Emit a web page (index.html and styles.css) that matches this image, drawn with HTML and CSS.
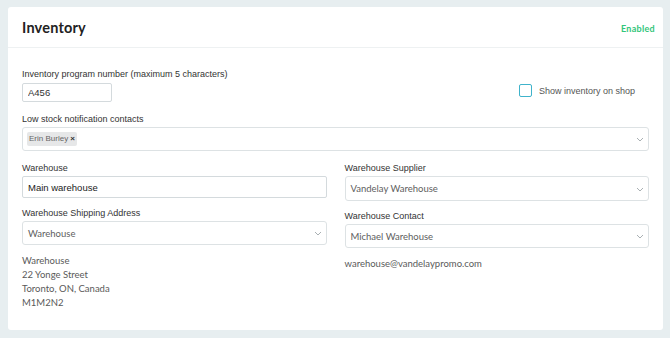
FILE: index.html
```html
<!DOCTYPE html>
<html lang="en">
<head>
  <meta charset="UTF-8">
  <title>Inventory</title>
  <link rel="stylesheet" href="styles.css">
</head>
<body>
  <div class="card">
    <div class="card-header">
      <h2>Inventory</h2>
      <span class="status">Enabled</span>
    </div>
    <div class="card-body">
      <div class="row-top">
        <div class="field">
          <label>Inventory program number (maximum 5 characters)</label>
          <input type="text" class="input input-short" value="A456">
        </div>
        <label class="check">
          <span class="box"></span>
          Show inventory on shop
        </label>
      </div>

      <div class="field">
        <label>Low stock notification contacts</label>
        <div class="multi">
          <span class="tag">Erin Burley <b>&times;</b></span>
          <svg class="chevron" viewBox="0 0 8 5" width="8" height="5"><path d="M1 1l3 3 3-3" fill="none" stroke="#a9b0b3" stroke-width="1"/></svg>
        </div>
      </div>

      <div class="columns">
        <div class="col">
          <div class="field">
            <label>Warehouse</label>
            <input type="text" class="input input-dark" value="Main warehouse">
          </div>
          <div class="field">
            <label>Warehouse Shipping Address</label>
            <div class="select">
              Warehouse
              <svg class="chevron" viewBox="0 0 8 5" width="8" height="5"><path d="M1 1l3 3 3-3" fill="none" stroke="#a9b0b3" stroke-width="1"/></svg>
            </div>
          </div>
          <p class="info">Warehouse<br>22 Yonge Street<br>Toronto, ON, Canada<br>M1M2N2</p>
        </div>
        <div class="col">
          <div class="field">
            <label>Warehouse Supplier</label>
            <div class="select select-tall">
              Vandelay Warehouse
              <svg class="chevron" viewBox="0 0 8 5" width="8" height="5"><path d="M1 1l3 3 3-3" fill="none" stroke="#a9b0b3" stroke-width="1"/></svg>
            </div>
          </div>
          <div class="field">
            <label>Warehouse Contact</label>
            <div class="select">
              Michael Warehouse
              <svg class="chevron" viewBox="0 0 8 5" width="8" height="5"><path d="M1 1l3 3 3-3" fill="none" stroke="#a9b0b3" stroke-width="1"/></svg>
            </div>
          </div>
          <p class="info">warehouse@vandelaypromo.com</p>
        </div>
      </div>
    </div>
  </div>
</body>
</html>
```

FILE: styles.css
```css
* {
  box-sizing: border-box;
  margin: 0;
  padding: 0;
}

body {
  background: #e7eef0;
  padding: 7px 7px 9px 8px;
  font-family: 'Liberation Sans', Arial, sans-serif;
  color: #333;
}

.card {
  background: #fff;
  border-radius: 3px;
  height: 323px;
}

.card-header {
  height: 41px;
  display: flex;
  align-items: center;
  justify-content: space-between;
  padding: 0 8px 0 14px;
  border-bottom: 1px solid #eef1f2;
}

.card-header h2 {
  font-family: 'Lato', sans-serif;
  font-size: 14.5px;
  font-weight: 700;
  color: #222;
  letter-spacing: 0.2px;
  margin-top: 1px;
}

.status {
  font-family: 'Lato', sans-serif;
  font-size: 9px;
  font-weight: 700;
  color: #33c57a;
  letter-spacing: 0.3px;
  margin-top: 2px;
}

.card-body {
  padding: 20px 14px 0 14px;
  display: flex;
  flex-direction: column;
  gap: 11px;
}

.field {
  display: flex;
  flex-direction: column;
  gap: 2px;
}

label {
  font-size: 9px;
  line-height: 12px;
  color: #333;
}

.row-top {
  display: flex;
  align-items: flex-end;
  justify-content: space-between;
}

.row-top .field {
  gap: 3px;
}

.input {
  height: 19px;
  border: 1px solid #d4dadd;
  border-radius: 2px;
  padding: 0 5px;
  font-family: 'Liberation Sans', Arial, sans-serif;
  font-size: 9.5px;
  color: #333;
  outline: none;
}

.input-short {
  width: 90px;
}

.input-dark {
  height: 22px;
  font-size: 9.5px;
  color: #222;
}

.check {
  display: flex;
  align-items: center;
  gap: 7px;
  color: #555;
  margin: 0 14px 5px 0;
}

.box {
  width: 13px;
  height: 13px;
  border: 1.5px solid #3fb3cb;
  border-radius: 2px;
}

.multi,
.select {
  position: relative;
  display: flex;
  align-items: center;
  height: 24px;
  border: 1px solid #dde2e4;
  border-radius: 3px;
  padding: 0 4px;
}

.select {
  padding: 0 5px;
  font-family: 'Lato', sans-serif;
  font-size: 9.5px;
  color: #606060;
}

.select-tall {
  height: 25px;
}

.tag {
  background: #e6e7e8;
  border-radius: 2px;
  padding: 2px 2px;
  font-size: 8px;
  line-height: 10px;
  color: #666;
}

.tag b {
  color: #333;
}

.chevron {
  position: absolute;
  right: 4px;
  top: 50%;
  margin-top: -2px;
}

.columns {
  display: grid;
  grid-template-columns: 1fr 1fr;
  gap: 18px;
}

.col {
  display: flex;
  flex-direction: column;
  gap: 9px;
}

.info {
  font-family: 'Lato', sans-serif;
  font-size: 9.5px;
  line-height: 14px;
  color: #5a5a5a;
}
```
